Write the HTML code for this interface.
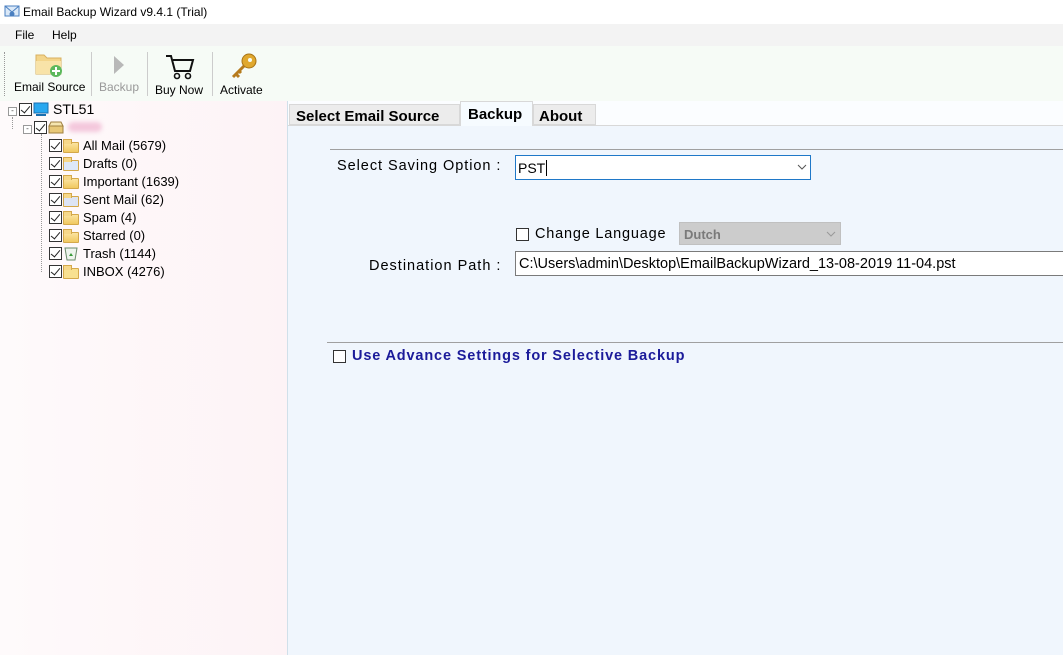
<!DOCTYPE html>
<html><head><meta charset="utf-8"><style>
*{margin:0;padding:0;box-sizing:border-box}
body{width:1063px;height:655px;overflow:hidden;background:#fff;font-family:"Liberation Sans",sans-serif;position:relative;color:#000}
.a{position:absolute}
.cb{position:absolute;width:13px;height:13px;border:1px solid #333;background:#fff}
.cb.k::after{content:"";position:absolute;left:3px;top:0px;width:4px;height:8px;border:solid #222;border-width:0 1.5px 1.5px 0;transform:rotate(40deg)}
.fold{position:absolute;width:16px;height:11px;background:linear-gradient(#fbe3a0,#f0c860);border:1px solid #d4a84a;border-radius:1px}
.fold::before{content:"";position:absolute;left:-1px;top:-4px;width:7px;height:4px;background:#f6d88a;border:1px solid #d4a84a;border-bottom:none}
.t{position:absolute;font-size:13px;left:83px}
.sep{position:absolute;top:52px;width:1px;height:44px;background:#ccc}
.tb{position:absolute;font-size:12px}
</style></head><body>
<div class="a" style="left:0;top:0;width:1063px;height:24px;background:#fff"></div>
<svg class="a" style="left:4px;top:4px" width="16" height="14"><rect x="1" y="2" width="14" height="10" fill="#dbe9f8" stroke="#4a7fc0"/><path d="M1 2 L8 8 L15 2" fill="none" stroke="#4a7fc0"/><circle cx="8" cy="10" r="2.5" fill="#4a7fc0"/></svg>
<div class="a" style="left:23px;top:5px;font-size:12px">Email Backup Wizard v9.4.1 (Trial)</div>
<div class="a" style="left:0;top:24px;width:1063px;height:22px;background:#f3f3f3"></div>
<div class="a" style="left:15px;top:28px;font-size:12px">File</div>
<div class="a" style="left:52px;top:28px;font-size:12px">Help</div>
<div class="a" style="left:0;top:46px;width:1063px;height:55px;background:#f6fbf6"></div>
<div class="a" style="left:4px;top:52px;height:44px;border-left:1px dotted #999"></div>
<svg class="a" style="left:34px;top:51px" width="30" height="28"><path d="M2 4h8l3 3h14v16H2z" fill="#f3d58a" stroke="#d8b060"/><rect x="2" y="10" width="25" height="13" fill="#f8e3a8"/><circle cx="22" cy="20" r="6" fill="#5cb85c"/><path d="M22 16v8M18 20h8" stroke="#fff" stroke-width="2"/></svg>
<div class="tb" style="left:14px;top:80px">Email Source</div>
<div class="sep" style="left:91px"></div>
<svg class="a" style="left:112px;top:55px" width="14" height="20"><path d="M2 1 L12 10 L2 19z" fill="#b8b8b8"/></svg>
<div class="tb" style="left:99px;top:80px;color:#999">Backup</div>
<div class="sep" style="left:147px"></div>
<svg class="a" style="left:165px;top:54px" width="30" height="26"><path d="M1 2h5l4 15h15l3-11H8" fill="none" stroke="#111" stroke-width="2"/><circle cx="12" cy="22" r="2.5" fill="none" stroke="#111" stroke-width="1.6"/><circle cx="23" cy="22" r="2.5" fill="none" stroke="#111" stroke-width="1.6"/></svg>
<div class="tb" style="left:155px;top:83px">Buy Now</div>
<div class="sep" style="left:212px"></div>
<svg class="a" style="left:230px;top:52px" width="28" height="28"><circle cx="19" cy="9" r="7" fill="#e0a82e" stroke="#a87416"/><circle cx="20" cy="8" r="2" fill="#f6fbf6"/><path d="M14 14 L3 25 M6 22l3 3 M9 19l2 2" stroke="#b67b1c" stroke-width="3"/></svg>
<div class="tb" style="left:220px;top:83px">Activate</div>
<div class="a" style="left:0;top:101px;width:287px;height:554px;background:linear-gradient(90deg,#fefafb,#fdf3f6)"></div>
<div class="a" style="left:287px;top:101px;width:1px;height:554px;background:#d0e0ea"></div>
<div class="a" style="left:8px;top:107px;width:9px;height:9px;border:1px solid #999;background:#fff;font-size:8px;line-height:6px;text-align:center;color:#444">-</div>
<div class="cb k" style="left:19px;top:103px"></div>
<svg class="a" style="left:33px;top:102px" width="16" height="15"><rect x="1" y="1" width="14" height="10" fill="#29a8f0" stroke="#1a6fb0"/><rect x="3" y="12" width="10" height="2" fill="#1a6fb0"/></svg>
<div class="a" style="left:53px;top:101px;font-size:14px">STL51</div>
<div class="a" style="left:12px;top:117px;height:12px;border-left:1px dotted #999"></div>
<div class="a" style="left:23px;top:125px;width:9px;height:9px;border:1px solid #999;background:#fff;font-size:8px;line-height:6px;text-align:center;color:#444">-</div>
<div class="cb k" style="left:34px;top:121px"></div>
<svg class="a" style="left:48px;top:120px" width="16" height="14"><path d="M1 6h14v7H1z" fill="#e8c878" stroke="#a08040"/><path d="M3 2h10l2 4H1z" fill="#f5e5b0" stroke="#a08040"/></svg>
<div class="a" style="left:68px;top:122px;width:34px;height:10px;background:#f4c8dc;border-radius:5px;filter:blur(2px)"></div>
<div class="a" style="left:41px;top:134px;height:138px;border-left:1px dotted #999"></div>
<div class="cb k" style="left:49px;top:139px"></div><div class="fold" style="left:63px;top:142px"></div><div class="t" style="top:138px">All Mail (5679)</div>
<div class="cb k" style="left:49px;top:157px"></div><div class="fold" style="left:63px;top:160px;background:#dde8f8"></div><div class="t" style="top:156px">Drafts (0)</div>
<div class="cb k" style="left:49px;top:175px"></div><div class="fold" style="left:63px;top:178px"></div><div class="t" style="top:174px">Important (1639)</div>
<div class="cb k" style="left:49px;top:193px"></div><div class="fold" style="left:63px;top:196px;background:#dde4f4"></div><div class="t" style="top:192px">Sent Mail (62)</div>
<div class="cb k" style="left:49px;top:211px"></div><div class="fold" style="left:63px;top:214px"></div><div class="t" style="top:210px">Spam (4)</div>
<div class="cb k" style="left:49px;top:229px"></div><div class="fold" style="left:63px;top:232px"></div><div class="t" style="top:228px">Starred (0)</div>
<div class="cb k" style="left:49px;top:247px"></div><svg class="a" style="left:63px;top:246px" width="16" height="15"><path d="M2 2h12l-2 12H4z" fill="#eef4ee" stroke="#6a8a6a"/><path d="M6 10l2-3 2 3z" fill="#3a9a3a"/></svg><div class="t" style="top:246px">Trash (1144)</div>
<div class="cb k" style="left:49px;top:265px"></div><div class="fold" style="left:63px;top:268px;background:#f8e090"></div><div class="t" style="top:264px">INBOX (4276)</div>
<div class="a" style="left:288px;top:101px;width:775px;height:24px;background:#fbfdff"></div>
<div class="a" style="left:288px;top:125px;width:775px;height:530px;background:#f0f6fd;border-top:1px solid #d8d8d8"></div>
<div class="a" style="left:289px;top:104px;width:171px;height:21px;background:#ececec;border:1px solid #d8d8d8;font-weight:bold;font-size:15px;padding:3px 0 0 6px">Select Email Source</div>
<div class="a" style="left:460px;top:101px;width:73px;height:25px;background:#f6fbff;border:1px solid #d8d8d8;border-bottom:none;font-weight:bold;font-size:15px;padding:4px 0 0 7px">Backup</div>
<div class="a" style="left:533px;top:104px;width:63px;height:21px;background:#ececec;border:1px solid #d8d8d8;font-weight:bold;font-size:15px;padding:3px 0 0 5px">About</div>
<div class="a" style="left:330px;top:149px;width:733px;height:1px;background:#a0a0a0"></div>
<div class="a" style="left:337px;top:158px;font-size:14.5px;letter-spacing:0.95px">Select Saving Option :</div>
<div class="a" style="left:515px;top:155px;width:296px;height:25px;background:#fff;border:1px solid #1f78c8;font-size:14px;padding:4px 0 0 2px">PST<span style="border-left:1px solid #000;margin-left:1px"></span></div>
<svg class="a" style="left:797px;top:164px" width="10" height="7"><path d="M1 1l4 4 4-4" fill="none" stroke="#555"/></svg>
<div class="cb" style="left:516px;top:228px;border-color:#333"></div>
<div class="a" style="left:535px;top:226px;font-size:14.5px;letter-spacing:0.8px">Change Language</div>
<div class="a" style="left:679px;top:222px;width:162px;height:23px;background:#cccccc;border:1px solid #c0c0c0;font-weight:bold;font-size:13px;color:#7a7a7a;padding:4px 0 0 4px">Dutch</div>
<svg class="a" style="left:826px;top:231px" width="10" height="7"><path d="M1 1l4 4 4-4" fill="none" stroke="#999"/></svg>
<div class="a" style="left:369px;top:258px;font-size:14.5px;letter-spacing:1px">Destination Path :</div>
<div class="a" style="left:515px;top:251px;width:560px;height:25px;background:#fff;border:1px solid #7a7a7a;font-size:14.5px;padding:4px 0 0 3px;white-space:nowrap">C:\Users\admin\Desktop\EmailBackupWizard_13-08-2019 11-04.pst</div>
<div class="a" style="left:327px;top:342px;width:736px;height:1px;background:#a0a0a0"></div>
<div class="cb" style="left:333px;top:350px;border-color:#333"></div>
<div class="a" style="left:352px;top:348px;font-size:14.5px;font-weight:bold;color:#1b1b9a;letter-spacing:0.85px">Use Advance Settings for Selective Backup</div>
</body></html>
